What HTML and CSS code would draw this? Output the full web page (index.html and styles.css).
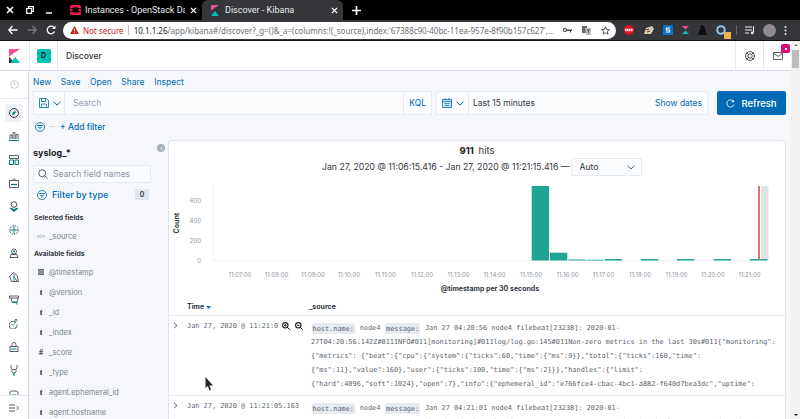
FILE: index.html
```html
<!DOCTYPE html>
<html lang="en">
<head>
    <meta charset="UTF-8">
    <meta name="viewport" content="width=device-width, initial-scale=1.0">
    <title>Discover - Kibana</title>
    <link rel="stylesheet" href="styles.css">
</head>
<body>
    <!-- browser tabs -->
    <div class="tabbar">
        <div class="win-btns">
            <svg width="8" height="8" viewBox="0 0 8 8"><path d="M1 1l6 6M7 1L1 7" stroke="#fff" stroke-width="1.6"/></svg>
            <svg width="8" height="8" viewBox="0 0 8 8"><path d="M0.7 2.5h4.8v4.8H0.7zM2.5 2.5V0.7h4.8v4.8H5.5" stroke="#fff" stroke-width="1.2" fill="none"/></svg>
            <svg width="8" height="8" viewBox="0 0 8 8"><path d="M1 7h6" stroke="#fff" stroke-width="1.5"/></svg>
        </div>
        <div class="tab">
            <svg class="tab-icon" width="11" height="10" viewBox="0 0 11 10"><path d="M0 3V1.5A1.5 1.5 0 0 1 1.5 0h8A1.5 1.5 0 0 1 11 1.5V3H8V2.500H3V3zM0 7v1.500A1.500 1.500 0 0 0 1.500 10h8A1.500 1.500 0 0 0 11 8.500V7H8v.5H3V7zM0 3.800h2.500v2.400H0zM8.500 3.800H11v2.400H8.500z" fill="#ed1944"/></svg>
            <span class="tab-title">Instances - OpenStack Da</span>
            <svg class="tab-x" width="7" height="7" viewBox="0 0 8 8"><path d="M1 1l6 6M7 1L1 7" stroke="#fff" stroke-width="1.500"/></svg>
        </div>
        <div class="tab tab-active">
            <svg class="tab-icon" width="8" height="11" viewBox="0 0 8 11"><path d="M0 0h8L0 5.500z" fill="#f04e98"/><path d="M0 11l8 0-4-5z" fill="#00bfb3"/></svg>
            <span class="tab-title">Discover - Kibana</span>
            <svg class="tab-x" width="7" height="7" viewBox="0 0 8 8"><path d="M1 1l6 6M7 1L1 7" stroke="#fff" stroke-width="1.500"/></svg>
        </div>
        <svg class="tab-new" width="9" height="9" viewBox="0 0 9 9"><path d="M4.500 0v9M0 4.500h9" stroke="#fff" stroke-width="1.700"/></svg>
    </div>

    <!-- browser toolbar -->
    <div class="toolbar">
        <div class="tool-nav">
            <svg width="10" height="10" viewBox="0 0 10 10"><path d="M9.500 5H1M4.500 1L.8 5l3.700 4" stroke="#fff" stroke-width="1.300" fill="none"/></svg>
            <svg width="10" height="10" viewBox="0 0 10 10"><path d="M.5 5H9M5.500 1l3.700 4-3.700 4" stroke="#777" stroke-width="1.300" fill="none"/></svg>
            <svg width="10" height="10" viewBox="0 0 10 10"><path d="M8.500 6.500A3.800 3.800 0 1 1 8 2.600" stroke="#fff" stroke-width="1.300" fill="none"/><path d="M9.500 0.500v3.500H6z" fill="#fff"/></svg>
        </div>
        <div class="omnibox">
            <svg width="9" height="8" viewBox="0 0 9 8"><path d="M4.500 0L9 8H0z" fill="#c5221f"/><path d="M4.500 3v2.500M4.500 6v1" stroke="#fff" stroke-width="0.900"/></svg>
            <span class="not-secure">Not secure</span>
            <span class="omni-sep"></span>
            <span class="url"><b>10.1.1.26</b>/app/kibana#/discover?_g=()&amp;_a=(columns:!(_source),index:'67388c90-40bc-11ea-957e-8f90b157c627',...</span>
            <svg class="omni-key" width="9" height="6" viewBox="0 0 9 6"><circle cx="2" cy="3" r="1.500" fill="none" stroke="#444" stroke-width="1.100"/><path d="M3.500 2.500H9v1.500H8v1.500H7V4H3.500z" fill="#444"/></svg>
            <svg class="omni-trans" width="9" height="9" viewBox="0 0 9 9"><path d="M0 0h5v7H0z" fill="#666"/><path d="M3 2h6v7H4z" fill="#bbb"/><path d="M5 4h3M6.500 4v3" stroke="#444" stroke-width="0.800"/></svg>
            <svg class="omni-star" width="9" height="9" viewBox="0 0 10 10"><path d="M5 .8l1.300 2.900 3.100.3-2.400 2 .8 3.100L5 7.500 2.200 9.100 3 6 .6 4l3.100-.3z" fill="none" stroke="#444" stroke-width="1"/></svg>
        </div>
        <div class="exts">
            <svg width="10" height="10" viewBox="0 0 10 10"><circle cx="5" cy="5" r="5" fill="#e0141e"/><path d="M1 5h8" stroke="#fff" stroke-width="2.400" stroke-dasharray="1.500 .5"/></svg>
            <svg width="11" height="9" viewBox="0 0 11 9"><path d="M1 8L3 2l6-2 2 3-3 5z" fill="#d9cbb5"/><path d="M3 4l3-1M4 6l3-1" stroke="#5a3b22" stroke-width="1"/></svg>
            <svg width="10" height="10" viewBox="0 0 10 10"><path d="M0 0h10v10H0z" fill="#0a73c9"/><path d="M7 3H3.500v2h3v2H3" stroke="#fff" stroke-width="1.200" fill="none"/></svg>
            <svg width="7" height="8" viewBox="0 0 7 8"><path d="M0 0h7L3.500 3.500z" fill="#f04e98"/><path d="M0 8h7L3.500 4.500z" fill="#00bfb3"/></svg>
            <svg width="9" height="10" viewBox="0 0 9 10"><circle cx="4.500" cy="2.500" r="2.200" fill="#0c0c0c"/><path d="M0 10l2-6h5l2 6z" fill="#0c0c0c"/></svg>
            <span class="ext-q">
                <svg width="11" height="11" viewBox="0 0 11 11"><circle cx="5" cy="5" r="3.800" fill="none" stroke="#8fc6ee" stroke-width="2"/></svg>
                <span class="ext-badge"></span>
            </span>
            <span class="ext-sep"></span>
            <svg width="10" height="9" viewBox="0 0 10 9"><path d="M0 1h7M0 4h7M0 7h4" stroke="#eee" stroke-width="1.100"/><path d="M8.500 0v6.500" stroke="#eee" stroke-width="1.100"/><circle cx="7.300" cy="7" r="1.400" fill="#eee"/></svg>
            <span class="avatar"></span>
            <svg width="3" height="9" viewBox="0 0 3 9"><circle cx="1.500" cy="1" r="1" fill="#eee"/><circle cx="1.500" cy="4.500" r="1" fill="#eee"/><circle cx="1.500" cy="8" r="1" fill="#eee"/></svg>
        </div>
    </div>

    <div class="page">
        <div class="app">
            <!-- kibana header -->
            <header class="header">
                <div class="logo-cell">
                    <svg width="11" height="14" viewBox="0 0 11 14"><path d="M0 0h11L0 7.500z" fill="#f04e98"/><path d="M0 7.500v6.500h5.500z" fill="#343741"/><path d="M1.500 14H11L6.200 8z" fill="#00bfb3"/></svg>
                </div>
                <div class="space-cell"><span class="space-badge">D</span></div>
                <div class="crumb">Discover</div>
                <div class="head-cell">
                    <svg width="10" height="10" viewBox="0 0 10 10"><circle cx="5" cy="5" r="4.400" fill="none" stroke="#343741" stroke-width="0.900"/><circle cx="5" cy="5" r="2.200" fill="none" stroke="#343741" stroke-width="0.900"/><path d="M1.800 1.800l1.600 1.600M8.200 1.800L6.600 3.400M1.800 8.200l1.600-1.600M8.200 8.200L6.600 6.600" stroke="#343741" stroke-width="0.900"/></svg>
                </div>
                <div class="head-cell">
                    <svg width="10" height="8" viewBox="0 0 10 8"><path d="M.5.500h9v7h-9zM.5 1l4.500 3.500L9.500 1" fill="none" stroke="#343741" stroke-width="0.800"/></svg>
                    <span class="mail-badge"></span>
                </div>
            </header>

            <div class="workspace">
                <!-- kibana side nav -->
                <nav class="sidenav">
                    <div class="nav-recent">
                        <svg width="9" height="9" viewBox="0 0 10 10"><circle cx="5" cy="5" r="4.300" fill="none" stroke="#c2c6cd" stroke-width="1"/><path d="M5 2.500V5l2 1" fill="none" stroke="#c2c6cd"/></svg>
                    </div>
                    <div class="nav-list">
                        <span class="nav-item nav-active"><svg width="10" height="10" viewBox="0 0 10 10"><circle cx="5" cy="5" r="4.400" fill="none" stroke="#343741"/><path d="M3 7l1-3 3-1-1 3z" fill="#017d73"/></svg></span>
                        <span class="nav-item"><svg width="10" height="10" viewBox="0 0 10 10"><path d="M0 9.500h10" stroke="#017d73" stroke-width="1.200"/><path d="M1 8V4h2v4M4 8V1.500h2V8M7 8V3.500h2V8" fill="none" stroke="#343741" stroke-width="0.800"/></svg></span>
                        <span class="nav-item"><svg width="10" height="10" viewBox="0 0 10 10"><path d="M.5 .5h9v3h-9z" fill="none" stroke="#343741" stroke-width="0.800"/><path d="M.5 5h4v4.500h-4zM6 5h3.500v4.500H6z" fill="none" stroke="#017d73" stroke-width="1"/></svg></span>
                        <span class="nav-item"><svg width="10" height="10" viewBox="0 0 10 10"><path d="M.5 2.500h9v7h-9zM3 2.500L5 .5l2 2" fill="none" stroke="#343741" stroke-width="0.800"/><path d="M2 6.500h6" stroke="#017d73" stroke-width="1.200"/></svg></span>
                        <span class="nav-item"><svg width="10" height="11" viewBox="0 0 10 11"><circle cx="5" cy="3.500" r="2.800" fill="none" stroke="#343741" stroke-width="0.900"/><path d="M1 7l4 3.500L9 7 5 8.500z" fill="#017d73" stroke="#017d73"/></svg></span>
                        <span class="nav-item"><svg width="10" height="10" viewBox="0 0 10 10"><circle cx="5" cy="5" r="4.300" fill="none" stroke="#343741" stroke-dasharray="1.300 1.300"/><path d="M5 1v8M1 5h8" stroke="#017d73" stroke-width="0.900"/></svg></span>
                        <span class="nav-item"><svg width="10" height="10" viewBox="0 0 10 10"><circle cx="5" cy="3.500" r="2.500" fill="none" stroke="#343741" stroke-width="0.800"/><path d="M1 9.500h8L8 6.500H2z" fill="none" stroke="#343741" stroke-width="0.800"/><circle cx="5" cy="3.500" r="1" fill="#017d73"/></svg></span>
                        <span class="nav-item"><svg width="10" height="10" viewBox="0 0 10 10"><path d="M.5 4L5 .5l3 3 1.500 6h-7z" fill="none" stroke="#343741" stroke-width="0.800"/><path d="M5 2v7.500M5 5l3 4" stroke="#017d73" stroke-width="0.900"/></svg></span>
                        <span class="nav-item"><svg width="10" height="10" viewBox="0 0 10 10"><path d="M.5 1h9v2h-9zM2 3l1 4h5l1-4" fill="none" stroke="#343741" stroke-width="0.800"/><path d="M3 7.500h5v2" fill="none" stroke="#017d73"/></svg></span>
                        <span class="nav-item"><svg width="10" height="10" viewBox="0 0 10 10"><path d="M7 3.500a4 4 0 1 0 1 2" fill="none" stroke="#343741" stroke-width="0.800"/><path d="M2.500 5l1.500 1.500L7 2.500M7 0v3M5.500 1.500L7 0l1.500 1.500" fill="none" stroke="#017d73" stroke-width="0.800"/></svg></span>
                        <span class="nav-item"><svg width="10" height="10" viewBox="0 0 10 10"><path d="M1 4.500h8v5H1zM3 4.500V2.500a2 2 0 0 1 4 0v2" fill="none" stroke="#343741" stroke-width="0.800"/><path d="M2.500 7h5" stroke="#017d73"/></svg></span>
                        <span class="nav-item"><svg width="10" height="11" viewBox="0 0 10 11"><path d="M2 0v3l1.500 1.500h3L8 3V0M3 4.500v2l1 1.500h2l1-1.500v-2" fill="none" stroke="#343741" stroke-width="0.800"/><path d="M5 8v3" stroke="#017d73" stroke-width="1.200"/></svg></span>
                        <span class="nav-item"><svg width="10" height="10" viewBox="0 0 10 10"><path d="M1 9V4a2 2 0 0 1 2-2h4a2 2 0 0 1 2 2v5" fill="none" stroke="#343741" stroke-width="0.800"/><path d="M3 6h4" stroke="#017d73"/></svg></span>
                    </div>
                    <div class="nav-foot">
                        <svg width="10" height="8" viewBox="0 0 10 8"><path d="M0 1h6M0 4h6M0 7h6M7.500 2l2 2-2 2" fill="none" stroke="#343741" stroke-width="0.800"/></svg>
                    </div>
                </nav>

                <main class="discover">
                    <div class="menu">
                        <a>New</a><a>Save</a><a>Open</a><a>Share</a><a>Inspect</a>
                    </div>
                    <div class="query-row">
                        <div class="query">
                            <span class="q-save">
                                <svg width="10" height="10" viewBox="0 0 10 10"><path d="M.5.500h7l2 2v7h-9zM2.500.500v3h4v-3M2.500 9.500V6h5v3.500" fill="none" stroke="#006bb4" stroke-width="0.800"/></svg>
                                <svg width="8" height="5" viewBox="0 0 8 5"><path d="M.5.800L4 4 7.500.8" fill="none" stroke="#006bb4"/></svg>
                            </span>
                            <span class="q-input">Search</span>
                            <span class="q-kql">KQL</span>
                        </div>
                        <div class="dates">
                            <span class="q-save d-cal">
                                <svg width="10" height="10" viewBox="0 0 10 10"><path d="M.5 1.500h9v8h-9z" fill="#cfe3f2" stroke="#006bb4" stroke-width="0.800"/><path d="M.5 3.500h9M3 0v2M7 0v2M2.500 5.500h5M2.500 7.500h5" stroke="#006bb4" stroke-width="0.700"/></svg>
                                <svg width="8" height="5" viewBox="0 0 8 5"><path d="M.5.800L4 4 7.500.8" fill="none" stroke="#006bb4"/></svg>
                            </span>
                            <span class="d-range">Last 15 minutes</span>
                            <a class="d-show">Show dates</a>
                        </div>
                        <button class="refresh">
                            <svg width="9" height="9" viewBox="0 0 10 10"><path d="M8.800 6A4 4 0 1 1 7.500 1.900" fill="none" stroke="#fff" stroke-width="0.900"/><path d="M8.800.5v3H5.800z" fill="#fff"/></svg>
                            Refresh
                        </button>
                    </div>
                    <div class="filter-row">
                        <svg width="10" height="10" viewBox="0 0 10 10"><circle cx="5" cy="5" r="4.500" fill="none" stroke="#006bb4" stroke-width="0.800"/><path d="M2 3.500h6M3 5.300h4M4 7h2" stroke="#006bb4" stroke-width="0.800"/></svg>
                        <span class="filter-dash"></span>
                        <a class="add-filter">+ Add filter</a>
                    </div>

                    <div class="columns">
                        <aside class="fields">
                            <div class="index-row">
                                <span class="index-name">syslog_*</span>
                                <span class="collapse"><svg width="3" height="5" viewBox="0 0 3 5"><path d="M2.500.5L.7 2.500l1.800 2" fill="none" stroke="#f5f7fa" stroke-width="0.900"/></svg></span>
                            </div>
                            <div class="field-search">
                                <svg width="10" height="10" viewBox="0 0 10 10"><circle cx="4.200" cy="4.200" r="3.500" fill="none" stroke="#343741" stroke-width="0.800"/><path d="M6.800 6.800l2.800 2.800" stroke="#343741" stroke-width="0.800"/></svg>
                                <span>Search field names</span>
                            </div>
                            <div class="filter-type">
                                <svg width="10" height="10" viewBox="0 0 10 10"><circle cx="5" cy="5" r="4.500" fill="none" stroke="#006bb4" stroke-width="0.800"/><path d="M2 3.500h6M3 5.300h4M4 7h2" stroke="#006bb4" stroke-width="0.800"/></svg>
                                <span class="filter-label">Filter by type</span>
                                <span class="filter-count">0</span>
                            </div>
                            <h3 class="fields-title">Selected fields</h3>
                            <div class="field field-selected"><i class="field-icon">&lt;/&gt;</i>_source</div>
                            <h3 class="fields-title fields-title-next">Available fields</h3>
                            <ul class="field-list">
                                <li class="field"><i class="field-icon"><svg width="6" height="6" viewBox="0 0 6 6"><path d="M0 0h6v6H0z" fill="#69707d"/><path d="M0 2h6M0 4h6" stroke="#f5f7fa" stroke-width="0.500"/></svg></i>@timestamp</li>
                                <li class="field"><i class="field-icon field-t">t</i>@version</li>
                                <li class="field"><i class="field-icon field-t">t</i>_id</li>
                                <li class="field"><i class="field-icon field-t">t</i>_index</li>
                                <li class="field"><i class="field-icon field-t">#</i>_score</li>
                                <li class="field"><i class="field-icon field-t">t</i>_type</li>
                                <li class="field"><i class="field-icon field-t">t</i>agent.ephemeral_id</li>
                                <li class="field"><i class="field-icon field-t">t</i>agent.hostname</li>
                            </ul>
                        </aside>

                        <section class="results">
                            <div class="hits"><b>911</b> hits</div>
                            <div class="range">
                                <span>Jan 27, 2020 @ 11:06:15.416 - Jan 27, 2020 @ 11:21:15.416 —</span>
                                <span class="interval">Auto
                                    <svg width="8" height="5" viewBox="0 0 8 5"><path d="M.5.800L4 4 7.500.8" fill="none" stroke="#343741" stroke-width="0.800"/></svg>
                                </span>
                            </div>
                            <svg class="chart" width="618" height="122" viewBox="169 176 618 122">
                                <g class="tick">
                                    <text x="201" y="203" text-anchor="end">600</text>
                                    <text x="201" y="223" text-anchor="end">400</text>
                                    <text x="201" y="243" text-anchor="end">200</text>
                                    <text x="201" y="263" text-anchor="end">0</text>
                                    <text x="240" y="277" text-anchor="middle">11:07:00</text>
                                    <text x="276.500" y="277" text-anchor="middle">11:08:00</text>
                                    <text x="313" y="277" text-anchor="middle">11:09:00</text>
                                    <text x="349" y="277" text-anchor="middle">11:10:00</text>
                                    <text x="385.500" y="277" text-anchor="middle">11:11:00</text>
                                    <text x="422" y="277" text-anchor="middle">11:12:00</text>
                                    <text x="458.500" y="277" text-anchor="middle">11:13:00</text>
                                    <text x="494.500" y="277" text-anchor="middle">11:14:00</text>
                                    <text x="531" y="277" text-anchor="middle">11:15:00</text>
                                    <text x="567.500" y="277" text-anchor="middle">11:16:00</text>
                                    <text x="603.500" y="277" text-anchor="middle">11:17:00</text>
                                    <text x="640" y="277" text-anchor="middle">11:18:00</text>
                                    <text x="676.500" y="277" text-anchor="middle">11:19:00</text>
                                    <text x="713" y="277" text-anchor="middle">11:20:00</text>
                                    <text x="749.500" y="277" text-anchor="middle">11:21:00</text>
                                </g>
                                <path d="M213 186V260.500H768" fill="none" stroke="#eef0f3"/>
                                <rect x="761" y="186" width="7.500" height="74" fill="#e0e2e7"/>
                                <g fill="#1ea593">
                                    <rect x="531.700" y="186" width="17.300" height="74.500"/>
                                    <rect x="550" y="252.700" width="17.300" height="7.800"/>
                                    <rect x="568.300" y="259.500" width="17.300" height="1"/>
                                    <rect x="586.500" y="259.700" width="17.300" height="0.800"/>
                                    <rect x="604.700" y="259" width="17.300" height="1.500"/>
                                    <rect x="640.800" y="259" width="17.300" height="1.500"/>
                                    <rect x="677" y="259" width="17.300" height="1.500"/>
                                    <rect x="713.700" y="259" width="17.300" height="1.500"/>
                                    <rect x="750" y="259" width="17.300" height="1.500"/>
                                </g>
                                <rect x="758" y="186" width="2" height="74" fill="#d9776f"/>
                                <text class="axis-title" x="176" y="223" text-anchor="middle" transform="rotate(-90 176 223) translate(0 3)">Count</text>
                                <text class="axis-title" x="490" y="291" text-anchor="middle">@timestamp per 30 seconds</text>
                            </svg>

                            <div class="table-head">
                                <span class="col-time">Time <svg width="5" height="3" viewBox="0 0 5 3"><path d="M0 0h5L2.500 3z" fill="#006bb4"/></svg></span>
                                <span class="col-source">_source</span>
                            </div>
                            <div class="doc">
                                <svg class="doc-toggle" width="5" height="7" viewBox="0 0 5 7"><path d="M1 .8L4 3.500 1 6.200" fill="none" stroke="#343741" stroke-width="0.800"/></svg>
                                <div class="doc-time">
                                    <span class="doc-time-text doc-time-cut">Jan 27, 2020 @ 11:21:05.163</span>
                                    <svg width="8" height="8" viewBox="0 0 8 8"><circle cx="3.300" cy="3.300" r="2.700" fill="none" stroke="#1a1c21" stroke-width="1.100"/><path d="M5.300 5.300L7.800 7.800M2 3.300h2.600M3.300 2v2.600" stroke="#1a1c21" stroke-width="1"/></svg>
                                    <svg width="8" height="8" viewBox="0 0 8 8"><circle cx="3.300" cy="3.300" r="2.700" fill="none" stroke="#1a1c21" stroke-width="1.100"/><path d="M5.300 5.300L7.800 7.800M2 3.300h2.600" stroke="#1a1c21" stroke-width="1"/></svg>
                                </div>
                                <div class="doc-source">
                                    <div><span class="pill">host.name:</span> node4 <span class="pill">message:</span> Jan 27 04:20:56 node4 filebeat[23238]: 2020-01-</div>
                                    <div>27T04:20:56.142Z#011INFO#011[monitoring]#011log/log.go:145#011Non-zero metrics in the last 30s#011{"monitoring":</div>
                                    <div>{"metrics": {"beat":{"cpu":{"system":{"ticks":60,"time":{"ms":9}},"total":{"ticks":160,"time":</div>
                                    <div>{"ms":11},"value":160},"user":{"ticks":100,"time":{"ms":2}}},"handles":{"limit":</div>
                                    <div>{"hard":4096,"soft":1024},"open":7},"info":{"ephemeral_id":"e766fce4-cbac-4bc1-a882-f640d7bea3dc","uptime":</div>
                                </div>
                            </div>
                            <div class="doc">
                                <svg class="doc-toggle" width="5" height="7" viewBox="0 0 5 7"><path d="M1 .8L4 3.500 1 6.200" fill="none" stroke="#343741" stroke-width="0.800"/></svg>
                                <div class="doc-time">
                                    <span class="doc-time-text">Jan 27, 2020 @ 11:21:05.163</span>
                                </div>
                                <div class="doc-source">
                                    <div><span class="pill">host.name:</span> node4 <span class="pill">message:</span> Jan 27 04:21:01 node4 filebeat[23238]: 2020-01-</div>
                                    <div>27T04:21:01.142Z#011INFO#011[monitoring]#011log/log.go:145#011Non-zero metrics in the last 30s#011{"monitoring":</div>
                                </div>
                            </div>
                        </section>
                    </div>
                </main>
            </div>
        </div>
        <div class="scrollbar">
            <span class="sb-arrow sb-up"></span>
            <span class="sb-thumb"></span>
            <span class="sb-arrow sb-down"></span>
        </div>
        <!-- mouse pointer caught in the screenshot -->
        <svg class="pointer" width="8" height="14" viewBox="0 0 8 14"><path d="M.5 0v11l2.400-2 1.500 4.500 1.600-.7L4.500 8.500H8z" fill="#25272c"/></svg>
    </div>
</body>
</html>
```

FILE: styles.css
```css
* {
    box-sizing: border-box;
}

html, body {
    margin: 0;
    height: 419px;
    overflow: hidden;
}

body {
    display: flex;
    flex-direction: column;
    font-family: Inter, "Liberation Sans", sans-serif;
    background-color: #000;
}

/* browser chrome */
.tabbar {
    display: flex;
    align-items: flex-end;
    height: 20px;
    background-color: #000;
    color: #e8eaed;
    font-family: Roboto, sans-serif;
    font-size: 9px;
}

.win-btns {
    display: flex;
    align-items: center;
    gap: 11.5px;
    width: 70px;
    height: 20px;
    padding-left: 6px;
}

.tab {
    display: flex;
    align-items: center;
    width: 132px;
    height: 20px;
    padding-right: 5px;
}

.tab-icon {
    flex: none;
    margin-right: 4px;
}

.tab-title {
    flex: 1;
    overflow: hidden;
    white-space: nowrap;
}

.tab-x {
    flex: none;
    margin-left: 5px;
}

.tab-active {
    width: 141px;
    height: 20px;
    padding-left: 9px;
    background-color: #35363a;
    border-radius: 6px 6px 0 0;
}

.tab-active .tab-icon {
    margin-right: 6px;
}

.tab-new {
    align-self: center;
    margin-left: 9px;
}

.toolbar {
    display: flex;
    align-items: center;
    height: 21px;
    background-color: #35363a;
    border-bottom: 1px solid #111;
}

.tool-nav {
    display: flex;
    align-items: center;
    gap: 9px;
    width: 63px;
    padding-left: 8px;
}

.omnibox {
    display: flex;
    align-items: center;
    width: 553px;
    height: 17px;
    padding: 0 6px 0 7px;
    background-color: #fff;
    border-radius: 9px;
    font-family: "Noto Sans", sans-serif;
    font-size: 8px;
    color: #6c6f73;
    white-space: nowrap;
}

.not-secure {
    margin-left: 4px;
    color: #c5221f;
}

.omni-sep {
    width: 1px;
    height: 10px;
    margin: 0 5px 0 4px;
    background-color: #bbb;
}

.url {
    width: 423px;
    overflow: hidden;
}

.url b {
    font-weight: 400;
    color: #202124;
}

.omni-key {
    margin-left: 9px;
}

.omni-trans {
    margin-left: 10px;
}

.omni-star {
    margin-left: 10px;
}

.exts {
    display: flex;
    align-items: center;
    gap: 9px;
    margin-left: 8px;
}

.ext-q {
    position: relative;
    display: flex;
}

.ext-badge {
    position: absolute;
    right: -4px;
    bottom: -3px;
    width: 7px;
    height: 7px;
    background-color: #efb14b;
}

.ext-sep {
    width: 1px;
    height: 10px;
    margin: 0 -1px 0 0;
    background-color: #666;
}

.avatar {
    width: 13px;
    height: 13px;
    margin: 0 -1px 0 -1px;
    border-radius: 50%;
    background-color: #8f8b8e;
}

/* page */
.page {
    position: relative;
    flex: 1;
    display: flex;
    min-height: 0;
    background-color: #fff;
}

.app {
    flex: 1;
    display: flex;
    flex-direction: column;
    min-width: 0;
}

.scrollbar {
    flex: none;
    display: flex;
    flex-direction: column;
    width: 9px;
    background-color: #f1f1f1;
}

.sb-arrow {
    width: 0;
    height: 0;
    margin: 3px auto;
    border-left: 2px solid transparent;
    border-right: 2px solid transparent;
}

.sb-up {
    border-bottom: 2px solid #777;
}

.sb-down {
    margin-top: auto;
    margin-bottom: 3px;
    border-top: 2px solid #222;
}

.sb-thumb {
    height: 18px;
    margin: 1px 1px 0;
    background-color: #bdbdbd;
}

.pointer {
    position: absolute;
    left: 205px;
    top: 336px;
}

.header {
    flex: none;
    display: flex;
    align-items: center;
    height: 30px;
    background-color: #fff;
    border-bottom: 1px solid #d3dae6;
}

.logo-cell {
    display: flex;
    align-items: center;
    justify-content: center;
    width: 29px;
    height: 29px;
    padding-right: 0;
}

.space-cell {
    display: flex;
    align-items: center;
    justify-content: center;
    width: 29px;
    height: 29px;
    border-left: 1px solid #e4e8ef;
    border-right: 1px solid #e4e8ef;
}

.space-badge {
    display: flex;
    align-items: center;
    justify-content: center;
    width: 14px;
    height: 14px;
    border-radius: 2px;
    background-color: #00bfb3;
    color: #16252b;
    font-size: 7px;
    font-weight: 700;
}

.crumb {
    flex: 1;
    margin-left: 8px;
    font-size: 8.5px;
    font-weight: 500;
    color: #343741;
}

.head-cell {
    position: relative;
    display: flex;
    align-items: center;
    justify-content: center;
    width: 28px;
    height: 29px;
    border-left: 1px solid #e4e8ef;
}

.mail-badge {
    position: absolute;
    left: 17px;
    top: 3px;
    width: 9px;
    height: 9px;
    background-color: #dd0a73;
    border-radius: 2px;
}

.mail-badge::after {
    content: "";
    display: block;
    width: 2px;
    height: 2px;
    margin: 3.5px auto 0;
    background-color: #fff;
}

.workspace {
    flex: 1;
    display: flex;
    min-height: 0;
}

/* kibana nav */
.sidenav {
    flex: none;
    display: flex;
    flex-direction: column;
    width: 29px;
    background-color: #fff;
    border-right: 1px solid #d3dae6;
}

.nav-recent {
    display: flex;
    align-items: center;
    justify-content: center;
    height: 28px;
    padding-top: 0;
    border-bottom: 1px solid #e4e8ef;
}

.nav-list {
    flex: 1;
    display: flex;
    flex-direction: column;
    align-items: center;
    padding-top: 5px;
    overflow: hidden;
}

.nav-item {
    flex: none;
    display: flex;
    align-items: center;
    justify-content: center;
    width: 18px;
    height: 18px;
    margin-bottom: 5.4px;
}

.nav-active {
    background-color: #f0f2f6;
    border-radius: 2px;
}

.nav-foot {
    display: flex;
    align-items: center;
    justify-content: center;
    height: 24px;
    border-top: 1px solid #e4e8ef;
}

/* discover */
.discover {
    flex: 1;
    display: flex;
    flex-direction: column;
    min-width: 0;
    padding-left: 4px;
    background-color: #f5f7fa;
}

.menu {
    flex: none;
    display: flex;
    gap: 9.6px;
    height: 20px;
    padding-top: 2px;
    align-items: center;
    font-size: 8.5px;
    color: #006bb4;
}

.query-row {
    flex: none;
    display: flex;
    gap: 4px;
    height: 24px;
    padding-right: 5px;
}

.query, .dates {
    display: flex;
    align-items: center;
    background-color: #fbfcfd;
    border: 1px solid #e6eaf1;
    font-size: 8.5px;
}

.query {
    width: 399px;
}

.dates {
    width: 272px;
}

.q-save {
    display: flex;
    align-items: center;
    gap: 4px;
    width: 31px;
    height: 100%;
    padding-left: 5px;
    border-right: 1px solid #e6eaf1;
}

.d-cal {
    width: 32px;
}

.q-input {
    flex: 1;
    padding-left: 8px;
    color: #98a2b3;
}

.q-kql {
    height: 100%;
    padding: 0 5px;
    line-height: 22px;
    border-left: 1px solid #e6eaf1;
    color: #006bb4;
}

.d-range {
    flex: 1;
    padding-left: 4px;
    color: #343741;
}

.d-show {
    padding-right: 5px;
    color: #006bb4;
}

.refresh {
    display: flex;
    align-items: center;
    justify-content: center;
    gap: 6px;
    width: 69px;
    margin-left: 5px;
    padding: 0;
    border: none;
    border-radius: 2px;
    background-color: #006bb4;
    color: #fff;
    font-family: inherit;
    font-size: 9.5px;
    font-weight: 500;
}

.filter-row {
    flex: none;
    display: flex;
    align-items: center;
    height: 23px;
    padding-left: 2px;
}

.filter-dash {
    width: 6px;
    height: 1px;
    margin: 0 5px 0 4px;
    background-color: #d3dae6;
}

.add-filter {
    font-size: 8.5px;
    font-weight: 500;
    color: #006bb4;
}

.columns {
    flex: 1;
    display: flex;
    min-height: 0;
    padding-top: 2px;
}

/* field list */
.fields {
    flex: none;
    width: 135px;
    color: #69707d;
}

.index-row {
    position: relative;
    height: 25px;
}

.index-name {
    font-size: 9px;
    font-weight: 700;
    line-height: 24px;
    color: #1a1c21;
}

.collapse {
    position: absolute;
    left: 124px;
    top: 4px;
    display: flex;
    align-items: center;
    justify-content: center;
    width: 8px;
    height: 8px;
    border-radius: 50%;
    background-color: #a9afb9;
}

.field-search {
    display: flex;
    align-items: center;
    gap: 5px;
    width: 118px;
    height: 18px;
    padding-left: 4px;
    background-color: #fbfcfd;
    border: 1px solid #e6eaf1;
    font-size: 8.5px;
    color: #8d95a3;
}

.filter-type {
    display: flex;
    align-items: center;
    height: 17px;
    margin-top: 3px;
    padding: 0 19px 0 4px;
    font-size: 9px;
    color: #006bb4;
}

.filter-label {
    flex: 1;
    margin-left: 5px;
    font-weight: 500;
}

.filter-count {
    width: 14px;
    height: 11px;
    border-radius: 2px;
    background-color: #e0e5ee;
    color: #343741;
    font-size: 7px;
    font-weight: 600;
    line-height: 11px;
    text-align: center;
}

.fields-title {
    margin: 10px 0 0 1px;
    height: 10px;
    font-size: 6.8px;
    font-weight: 700;
    line-height: 10px;
    color: #343741;
}

.fields-title-next {
    margin-top: 3px;
}

.field-list {
    margin: 3px 0 0;
    padding: 0;
    list-style: none;
}

.field {
    display: flex;
    align-items: center;
    height: 20px;
    font-size: 7.5px;
    color: #7b828f;
}

.field-selected {
    margin-top: 3px;
}

.field-icon {
    flex: none;
    display: flex;
    justify-content: center;
    width: 16px;
    font-size: 5px;
    font-style: normal;
    color: #7b828f;
}

.field-t {
    font-family: "Liberation Serif", serif;
    font-size: 8px;
    font-weight: 700;
    color: #1a1c21;
}

/* results panel */
.results {
    flex: 1;
    min-width: 0;
    margin-right: 5px;
    background-color: #fff;
    border: 1px solid #dfe5ef;
    border-bottom: none;
    border-radius: 3px 3px 0 0;
    overflow: hidden;
}

.hits {
    height: 17px;
    padding-top: 4px;
    font-size: 9.5px;
    line-height: 12px;
    text-align: center;
    color: #343741;
}

.hits b {
    margin-right: 2px;
    font-weight: 700;
    color: #1a1c21;
}

.range {
    display: flex;
    align-items: center;
    gap: 2px;
    height: 18px;
    padding-left: 153px;
    font-size: 8.7px;
    color: #343741;
}

.interval {
    display: flex;
    align-items: center;
    justify-content: space-between;
    width: 71px;
    height: 18px;
    padding: 0 6px 0 7px;
    background-color: #fbfcfd;
    border: 1px solid #e6eaf1;
    border-radius: 2px;
}

.chart {
    display: block;
}

.tick text {
    font-size: 6px;
    fill: #8f95a1;
}

.axis-title {
    font-size: 7px;
    font-weight: 700;
    fill: #343741;
}

.table-head {
    display: flex;
    align-items: center;
    height: 18px;
    border-bottom: 1px solid #e4e8ef;
    font-size: 7px;
    font-weight: 700;
    color: #343741;
}

.col-time {
    width: 140px;
    padding-left: 18px;
}

.doc {
    display: flex;
    padding-top: 8px;
    height: 80px;
    border-bottom: 1px solid #e4e8ef;
}

.doc-toggle {
    flex: none;
    margin: -2px 0 0 4px;
}

.doc-time {
    flex: none;
    display: flex;
    align-items: flex-start;
    gap: 3px;
    width: 133px;
    margin-top: -2px;
    padding-left: 9px;
    font-family: "DejaVu Sans Mono", monospace;
    font-size: 6.9px;
    line-height: 9px;
    color: #5a5f6a;
}

.doc-time-text {
    white-space: nowrap;
}

.doc-time-cut {
    width: 92px;
    overflow: hidden;
}

.doc-time svg:last-child {
    margin-left: 2px;
}

.doc-source {
    font-family: "DejaVu Sans Mono", monospace;
    font-size: 6.9px;
    line-height: 14px;
    margin-top: -3px;
    color: #5a5f6a;
    white-space: nowrap;
}

.pill {
    padding: 1.5px 1px;
    margin: 0 0.5px;
    background-color: #e6ebf2;
    border-radius: 2px;
}
```
